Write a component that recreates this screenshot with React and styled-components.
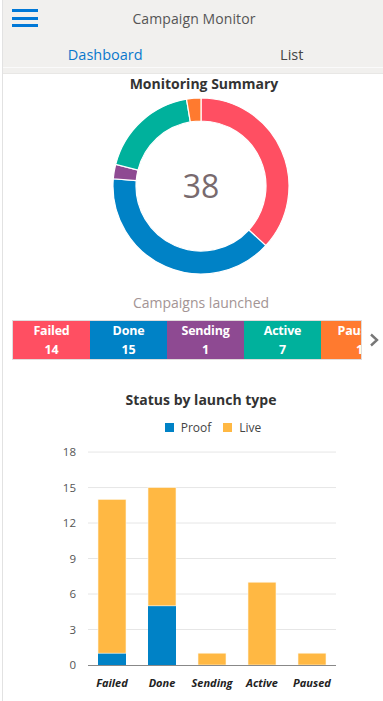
import React from "react";
import styled, { createGlobalStyle } from "styled-components";

const GlobalStyle = createGlobalStyle`
  html, body {
    margin: 0;
    padding: 0;
    background: #ffffff;
    font-family: "Open Sans", "Noto Sans", sans-serif;
  }
`;

const Page = styled.div`
  width: 383px;
  height: 701px;
  overflow: hidden;
  box-sizing: border-box;
  border-left: 1px solid #e2e2e2;
  margin-left: 2px;
  background: #fff;
`;

const Header = styled.div`
  background: #f1f0ee;
  height: 74px;
  margin-left: -3px;
  padding-left: 3px;
  box-sizing: border-box;
  display: flex;
  flex-direction: column;
  border-bottom: 1px solid #e8e7e5;
`;

const TopBar = styled.div`
  height: 36px;
  display: flex;
  align-items: center;
  position: relative;
  justify-content: center;
`;

const Burger = styled.button`
  position: absolute;
  left: 9px;
  top: 9px;
  width: 26px;
  height: 18px;
  border: 0;
  padding: 0;
  background: transparent;
  display: flex;
  flex-direction: column;
  justify-content: space-between;

  span {
    display: block;
    height: 3px;
    background: #0078d7;
  }
`;

const Title = styled.div`
  font-size: 14px;
  color: #555;
  letter-spacing: 0.1px;
`;

const Tabs = styled.div`
  display: flex;
  padding-left: 9px;
  padding-top: 5px;
  height: 32px;
  box-sizing: border-box;
  align-items: center;
  border-bottom: 1px solid #fafafa;
`;

const Tab = styled.div`
  flex: 1;
  text-align: center;
  font-size: 14.5px;
  color: ${p => (p.active ? "#0a78cc" : "#444")};
`;

const Section = styled.div`
  display: flex;
  flex-direction: column;
  align-items: center;
  padding-left: 14px;
`;

const Heading = styled.div`
  font-weight: 700;
  font-size: 14px;
  color: #333;
  margin-top: ${p => p.top || 0}px;
  margin-left: ${p => p.shift || 0}px;
  line-height: 18px;
`;

const Subtitle = styled.div`
  font-size: 14px;
  color: #a39494;
  line-height: 18px;
  margin-top: 13px;
`;

const TileStrip = styled.div`
  display: flex;
  align-items: center;
  align-self: stretch;
  margin-left: -14px;
  margin-top: 8px;
  padding-left: 9px;
`;

const TileRow = styled.div`
  display: flex;
  width: 348px;
  overflow: hidden;
  border: 1px solid #e0dcdc;
`;

const Tile = styled.div`
  flex: 0 0 77px;
  height: 38px;
  background: ${p => p.color};
  color: #fff;
  font-weight: 700;
  font-size: 12.5px;
  letter-spacing: -0.2px;
  display: flex;
  flex-direction: column;
  align-items: center;
  justify-content: center;
  line-height: 19px;
`;

const NextButton = styled.div`
  flex: 1;
  display: flex;
  justify-content: center;
  align-items: center;
`;

const Legend = styled.div`
  display: flex;
  gap: 12px;
  margin-top: 10px;
  font-size: 12px;
  color: #444;
  margin-left: 24px;
`;

const LegendItem = styled.div`
  display: flex;
  align-items: center;
  gap: 7px;

  i {
    display: block;
    width: 9px;
    height: 9px;
    background: ${p => p.color};
  }
`;

const ChartBox = styled.div`
  align-self: flex-start;
  margin-left: -14px;
  margin-top: 4px;
`;

const statuses = [
  { name: "Failed", count: 14, color: "#ff4f62", proof: 1 },
  { name: "Done", count: 15, color: "#0082c6", proof: 5 },
  { name: "Sending", count: 1, color: "#8e4a92", proof: 0 },
  { name: "Active", count: 7, color: "#00b19c", proof: 0 },
  { name: "Paused", count: 1, color: "#ff7a2f", proof: 0 },
];

function arc(cx, cy, r0, r1, a0, a1) {
  const p = (r, a) => {
    const t = ((a - 90) * Math.PI) / 180;
    return `${cx + r * Math.cos(t)} ${cy + r * Math.sin(t)}`;
  };
  const large = a1 - a0 > 180 ? 1 : 0;
  return `M ${p(r1, a0)} A ${r1} ${r1} 0 ${large} 1 ${p(r1, a1)} L ${p(r0, a1)} A ${r0} ${r0} 0 ${large} 0 ${p(r0, a0)} Z`;
}

function Donut() {
  const total = statuses.reduce((s, x) => s + x.count, 0);
  let a = 0;
  return (
    <svg width="190" height="190" viewBox="0 0 190 190" style={{ display: "block", marginTop: -2 }}>
      {statuses.map(s => {
        const a0 = a;
        a += (s.count / total) * 360;
        return (
          <path key={s.name} d={arc(95, 95, 65, 88, a0, a)} fill={s.color} stroke="#fff" strokeWidth="1.2" />
        );
      })}
      <text x="95" y="107" textAnchor="middle" fontSize="32" fill="#786a6e" fontFamily="Open Sans, sans-serif">
        {total}
      </text>
    </svg>
  );
}

function BarChart() {
  const base = 225;
  const unit = 11.83;
  const ticks = [0, 3, 6, 9, 12, 15, 18];
  return (
    <svg width="380" height="260" style={{ display: "block" }}>
      {ticks.map(t => (
        <g key={t}>
          {t > 0 && <line x1="85" x2="333" y1={base - t * unit} y2={base - t * unit} stroke="#e6e6e6" />}
          <text x="73" y={base - t * unit + 4} textAnchor="end" fontSize="11.5" fill="#555" fontFamily="Open Sans, sans-serif">
            {t}
          </text>
        </g>
      ))}
      {statuses.map((s, i) => {
        const x = 95 + i * 50;
        const live = s.count - s.proof;
        const proofH = s.proof * unit;
        const liveH = live * unit;
        return (
          <g key={s.name}>
            {s.proof > 0 && <rect x={x} y={base - proofH} width="28" height={proofH} fill="#0082c6" />}
            <rect x={x} y={base - proofH - liveH} width="28" height={liveH} fill="#ffb843" stroke="#fff7e6" strokeWidth="0.6" />
            <text x={x + 14} y={base + 22} textAnchor="middle" fontSize="11" fontWeight="700" fontStyle="italic" fill="#222" fontFamily="Open Sans, sans-serif">
              {s.name}
            </text>
          </g>
        );
      })}
      <line x1="85" x2="333" y1={base + 0.5} y2={base + 0.5} stroke="#888" />
    </svg>
  );
}

export default function App() {
  return (
    <>
      <GlobalStyle />
      <Page>
        <Header>
          <TopBar>
            <Burger aria-label="menu">
              <span />
              <span />
              <span />
            </Burger>
            <Title>Campaign Monitor</Title>
          </TopBar>
          <Tabs>
            <Tab active>Dashboard</Tab>
            <Tab>List</Tab>
          </Tabs>
        </Header>
        <Section>
          <Heading top={1} shift={6}>Monitoring Summary</Heading>
          <Donut />
          <Subtitle>Campaigns launched</Subtitle>
          <TileStrip>
            <TileRow>
              {statuses.map(s => (
                <Tile key={s.name} color={s.color}>
                  <span>{s.name}</span>
                  <span>{s.count}</span>
                </Tile>
              ))}
            </TileRow>
            <NextButton>
              <svg width="12" height="14" viewBox="0 0 12 14">
                <path d="M3 1.5 L9 7 L3 12.5" fill="none" stroke="#777" strokeWidth="2.4" />
              </svg>
            </NextButton>
          </TileStrip>
          <Heading top={31}>Status by launch type</Heading>
          <Legend>
            <LegendItem color="#0082c6"><i />Proof</LegendItem>
            <LegendItem color="#ffb843"><i />Live</LegendItem>
          </Legend>
          <ChartBox>
            <BarChart />
          </ChartBox>
        </Section>
      </Page>
    </>
  );
}
